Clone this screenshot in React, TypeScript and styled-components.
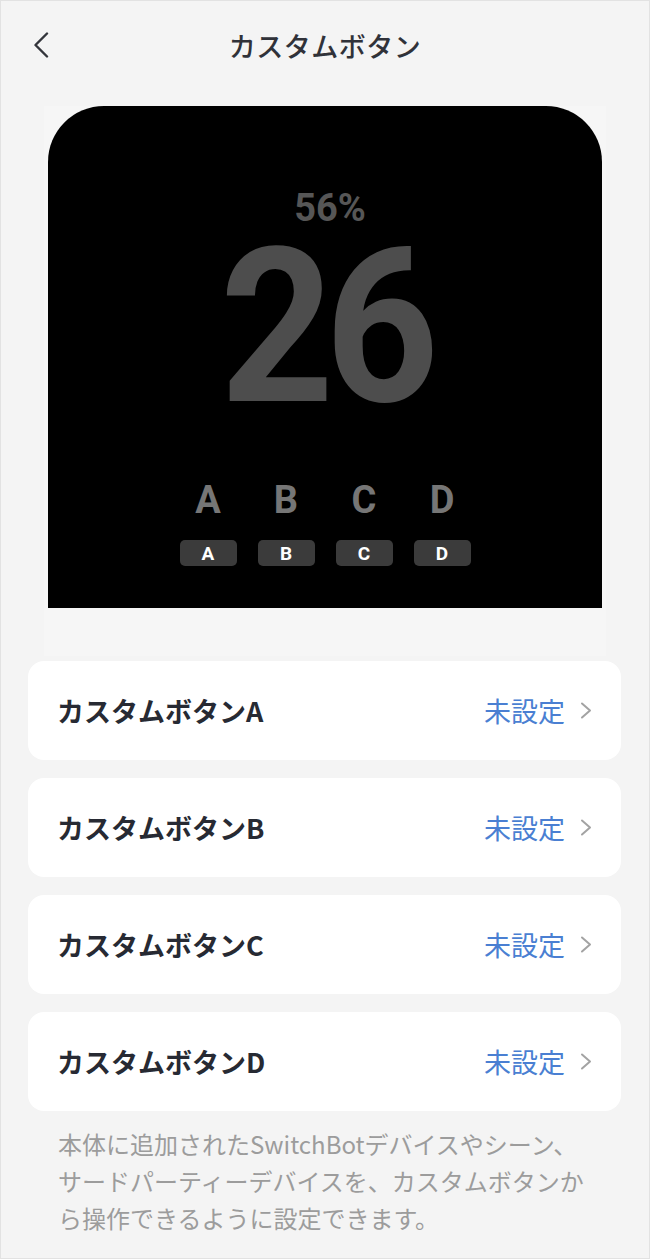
import React from 'react';
import styled, { createGlobalStyle } from 'styled-components';

const GlobalStyle = createGlobalStyle`
  html, body {
    margin: 0;
    padding: 0;
    background: #f4f4f4;
  }
  * {
    box-sizing: border-box;
  }
`;

const Page = styled.div`
  width: 650px;
  min-height: 1259px;
  background: #f4f4f4;
  border: 1px solid #e2e2e2;
  font-family: 'Noto Sans CJK JP', 'Noto Sans', sans-serif;
  color: #2a2d35;
`;

const Header = styled.header`
  height: 88px;
  display: grid;
  grid-template-columns: 1fr auto 1fr;
  align-items: center;
  padding: 0 32px;
`;

const BackButton = styled.button`
  justify-self: start;
  display: flex;
  align-items: center;
  padding: 0;
  border: none;
  background: none;
  cursor: pointer;
`;

const Title = styled.h1`
  margin: 0;
  font-size: 27px;
  font-weight: 500;
  color: #303239;
  letter-spacing: 0.5px;
`;

const PreviewArea = styled.section`
  margin: 17px 43px 0;
  padding: 0 4px 48px;
  background: #f6f6f6;
`;

const Screen = styled.div`
  height: 502px;
  background: #000;
  border-radius: 56px 56px 0 0;
  display: flex;
  flex-direction: column;
  align-items: center;
  padding-top: 84px;
  font-family: Roboto, 'Liberation Sans', sans-serif;
`;

const Humidity = styled.div`
  font-size: 38px;
  line-height: 36px;
  font-weight: 700;
  color: #565656;
  padding-left: 10px;
`;

const Temperature = styled.div`
  margin-top: 17px;
  font-size: 216px;
  line-height: 170px;
  font-weight: 700;
  color: #4d4d4d;
  letter-spacing: -10px;
  transform: scaleX(0.92);
`;

const KeyGrid = styled.div`
  margin-top: 68px;
  display: grid;
  grid-template-columns: repeat(4, 57px);
  column-gap: 21px;
  row-gap: 21px;
  justify-items: center;
`;

const KeyLetter = styled.div`
  font-size: 38px;
  line-height: 38px;
  font-weight: 700;
  color: #767676;
`;

const KeyPill = styled.div`
  width: 57px;
  height: 26px;
  border-radius: 5px;
  background: #3b3b3b;
  color: #fff;
  font-size: 19px;
  font-weight: 700;
  display: flex;
  align-items: center;
  justify-content: center;
`;

const List = styled.div`
  margin: 5px 28px 0 27px;
  display: flex;
  flex-direction: column;
  gap: 18px;
`;

const Row = styled.div`
  height: 99px;
  background: #fff;
  border-radius: 16px;
  display: flex;
  align-items: center;
  justify-content: space-between;
  padding: 0 29px 0 29px;
`;

const RowLabel = styled.span`
  font-size: 27px;
  font-weight: 700;
  color: #272a33;
`;

const RowValue = styled.span`
  display: flex;
  align-items: center;
  gap: 15px;
  font-size: 27px;
  color: #4a7fd2;
`;

const Note = styled.p`
  margin: 0;
  padding: 14px 56px 0 57px;
  font-size: 24px;
  line-height: 37px;
  color: #9c9c9c;
`;

const BackIcon = () => (
  <svg width="16" height="26" viewBox="0 0 16 26" fill="none">
    <polyline points="14,1.5 2.5,13 14,24.5" stroke="#33353b" strokeWidth="2.4" strokeLinecap="round" strokeLinejoin="round" />
  </svg>
);

const Chevron = () => (
  <svg width="12" height="17" viewBox="0 0 12 17" fill="none">
    <polyline points="2,1.5 10,8.5 2,15.5" stroke="#a3a3a3" strokeWidth="2" strokeLinecap="round" strokeLinejoin="round" />
  </svg>
);

const keys = ['A', 'B', 'C', 'D'];

const App: React.FC = () => {
  return (
    <Page>
      <GlobalStyle />
      <Header>
        <BackButton aria-label='back'>
          <BackIcon />
        </BackButton>
        <Title>カスタムボタン</Title>
        <span />
      </Header>
      <PreviewArea>
        <Screen>
          <Humidity>56%</Humidity>
          <Temperature>26</Temperature>
          <KeyGrid>
            {keys.map((k) => (
              <KeyLetter key={`letter-${k}`}>{k}</KeyLetter>
            ))}
            {keys.map((k) => (
              <KeyPill key={`pill-${k}`}>{k}</KeyPill>
            ))}
          </KeyGrid>
        </Screen>
      </PreviewArea>
      <List>
        {keys.map((k) => (
          <Row key={k}>
            <RowLabel>{`カスタムボタン${k}`}</RowLabel>
            <RowValue>
              未設定
              <Chevron />
            </RowValue>
          </Row>
        ))}
      </List>
      <Note>本体に追加されたSwitchBotデバイスやシーン、サードパーティーデバイスを、カスタムボタンから操作できるように設定できます。</Note>
    </Page>
  );
};

export default App;
